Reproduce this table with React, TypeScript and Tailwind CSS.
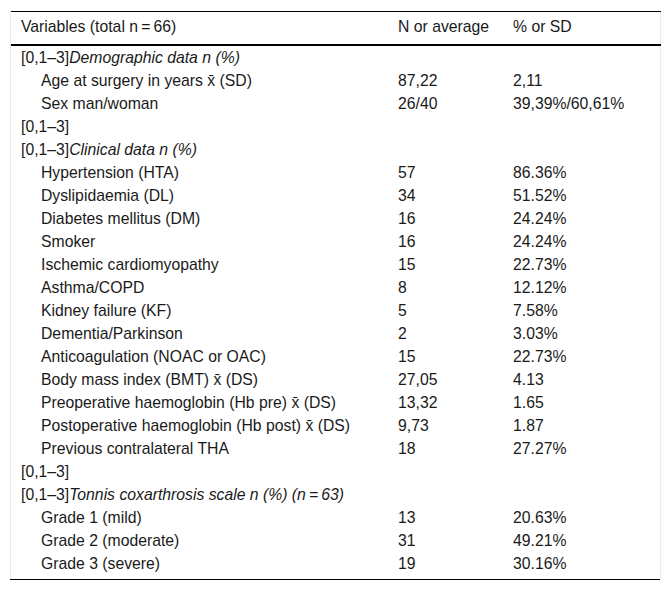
type Row = { label: React.ReactNode; n?: string; pct?: string; indent?: boolean };

const rows: Row[] = [
  { label: <>[0,1–3]<i>Demographic data n (%)</i></> },
  { label: 'Age at surgery in years x\u0304 (SD)', n: '87,22', pct: '2,11', indent: true },
  { label: 'Sex man/woman', n: '26/40', pct: '39,39%/60,61%', indent: true },
  { label: '[0,1–3]' },
  { label: <>[0,1–3]<i>Clinical data n (%)</i></> },
  { label: 'Hypertension (HTA)', n: '57', pct: '86.36%', indent: true },
  { label: 'Dyslipidaemia (DL)', n: '34', pct: '51.52%', indent: true },
  { label: 'Diabetes mellitus (DM)', n: '16', pct: '24.24%', indent: true },
  { label: 'Smoker', n: '16', pct: '24.24%', indent: true },
  { label: 'Ischemic cardiomyopathy', n: '15', pct: '22.73%', indent: true },
  { label: 'Asthma/COPD', n: '8', pct: '12.12%', indent: true },
  { label: 'Kidney failure (KF)', n: '5', pct: '7.58%', indent: true },
  { label: 'Dementia/Parkinson', n: '2', pct: '3.03%', indent: true },
  { label: 'Anticoagulation (NOAC or OAC)', n: '15', pct: '22.73%', indent: true },
  { label: 'Body mass index (BMT) x\u0304 (DS)', n: '27,05', pct: '4.13', indent: true },
  { label: 'Preoperative haemoglobin (Hb pre) x\u0304 (DS)', n: '13,32', pct: '1.65', indent: true },
  { label: 'Postoperative haemoglobin (Hb post) x\u0304 (DS)', n: '9,73', pct: '1.87', indent: true },
  { label: 'Previous contralateral THA', n: '18', pct: '27.27%', indent: true },
  { label: '[0,1–3]' },
  { label: <>[0,1–3]<i>Tonnis coxarthrosis scale n (%) (n{'\u2009'}={'\u2009'}63)</i></> },
  { label: 'Grade 1 (mild)', n: '13', pct: '20.63%', indent: true },
  { label: 'Grade 2 (moderate)', n: '31', pct: '49.21%', indent: true },
  { label: 'Grade 3 (severe)', n: '19', pct: '30.16%', indent: true },
];

export default function App() {
  return (
    <div className="min-h-screen bg-white pt-[11px] pl-[10px] font-['Liberation_Sans',Arial,sans-serif] text-[15.75px] text-[#1a1a1a]">
      <div className="w-[651px] border-x border-[#ececec] pb-[4px]">
        <table className="w-[650px] table-fixed border-collapse">
          <colgroup>
            <col className="w-[377px]" />
            <col className="w-[115px]" />
            <col />
          </colgroup>
          <thead>
            <tr className="border-t border-b-2 border-t-black border-b-black">
              <th className="h-[33px] px-[10px] pb-[2px] text-left font-normal">Variables (total n{'\u2009'}={'\u2009'}66)</th>
              <th className="px-[10px] pb-[2px] text-left font-normal">N or average</th>
              <th className="px-[10px] pb-[2px] text-left font-normal">% or SD</th>
            </tr>
          </thead>
          <tbody>
            {rows.map((r, i) => (
              <tr key={i} className="h-[23px] leading-[23px]">
                <td className={r.indent ? 'pl-[30px] pr-[10px] whitespace-nowrap' : 'px-[10px] whitespace-nowrap'}>{r.label}</td>
                <td className="px-[10px]">{r.n}</td>
                <td className="px-[10px]">{r.pct}</td>
              </tr>
            ))}
          </tbody>
        </table>
      </div>
      <div className="w-[650px] border-t border-black" />
    </div>
  );
}
